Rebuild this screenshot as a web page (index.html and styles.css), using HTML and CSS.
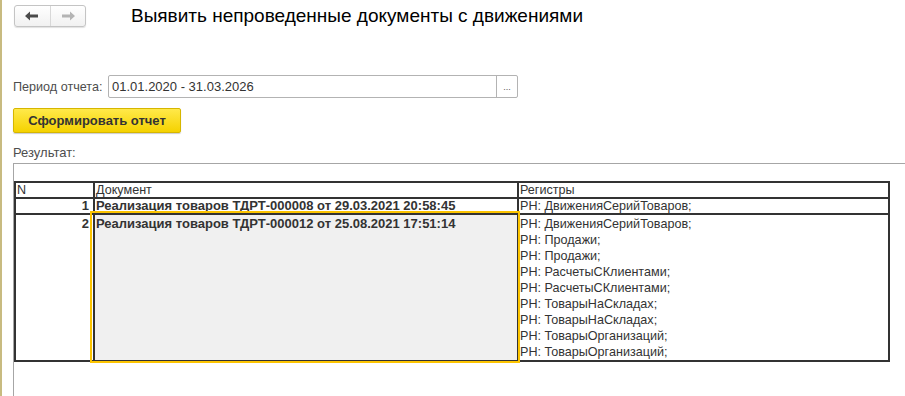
FILE: index.html
```html
<!DOCTYPE html>
<html lang="ru">
<head>
    <meta charset="UTF-8">
    <title>Выявить непроведенные документы с движениями</title>
    <link rel="stylesheet" href="styles.css">
</head>
<body>

<div class="window">
    <!-- Шапка формы -->
    <div class="header">
        <div class="nav">
            <span class="nav-btn">
                <svg width="14" height="10" viewBox="0 0 14 10"><path d="M0 5 L5 0.5 L5 3.5 L13 3.5 L13 6.5 L5 6.5 L5 9.5 Z" fill="#4a4a4a"/></svg>
            </span>
            <span class="nav-btn">
                <svg width="14" height="10" viewBox="0 0 14 10"><path d="M14 5 L9 0.5 L9 3.5 L1 3.5 L1 6.5 L9 6.5 L9 9.5 Z" fill="#b4b4b4"/></svg>
            </span>
        </div>
        <h1 class="title">Выявить непроведенные документы с движениями</h1>
    </div>

    <!-- Период -->
    <div class="period">
        <label class="period-label">Период отчета:</label>
        <div class="field">
            <span class="field-value">01.01.2020 - 31.03.2026</span>
            <span class="field-btn">...</span>
        </div>
    </div>

    <button class="btn-make">Сформировать отчет</button>

    <div class="result-label">Результат:</div>

    <!-- Табличный документ -->
    <div class="sheet">
        <table class="report">
            <tr class="head">
                <td class="col-n">N</td>
                <td class="col-doc">Документ</td>
                <td class="col-reg">Регистры</td>
            </tr>
            <tr>
                <td class="num">1</td>
                <td class="doc">Реализация товаров ТДРТ-000008 от 29.03.2021 20:58:45</td>
                <td>РН: ДвиженияСерийТоваров;</td>
            </tr>
            <tr class="tall">
                <td class="num">2</td>
                <td class="doc selected">Реализация товаров ТДРТ-000012 от 25.08.2021 17:51:14</td>
                <td>
                    <div>РН: ДвиженияСерийТоваров;</div>
                    <div>РН: Продажи;</div>
                    <div>РН: Продажи;</div>
                    <div>РН: РасчетыСКлиентами;</div>
                    <div>РН: РасчетыСКлиентами;</div>
                    <div>РН: ТоварыНаСкладах;</div>
                    <div>РН: ТоварыНаСкладах;</div>
                    <div>РН: ТоварыОрганизаций;</div>
                    <div>РН: ТоварыОрганизаций;</div>
                </td>
            </tr>
        </table>
    </div>
</div>

</body>
</html>
```

FILE: styles.css
```css
body {
    margin: 0;
    padding: 0;
    font-family: "Liberation Sans", Arial, sans-serif;
    background-color: #fff;
    color: #333;
    overflow: hidden;
}
.window {
    height: 396px;
    border-left: 2px solid #c8bb80;
    box-sizing: border-box;
}
.header {
    display: flex;
    align-items: center;
    padding-top: 5px;
}
.nav {
    display: flex;
    margin-left: 12px;
    width: 72px;
    height: 22px;
    box-sizing: border-box;
    border: 1px solid #c4c4c4;
    border-radius: 3px;
    background: linear-gradient(#ffffff, #f1f1f1);
    box-shadow: 0 1px 1px rgba(0, 0, 0, 0.12);
}
.nav-btn {
    flex: 1;
    display: flex;
    align-items: center;
    justify-content: center;
}
.nav-btn + .nav-btn {
    border-left: 1px solid #d8d8d8;
}
.title {
    margin: 0 0 0 45px;
    font-size: 19px;
    font-weight: normal;
    color: #000;
    line-height: 22px;
}
.period {
    display: flex;
    align-items: center;
    margin: 48px 0 0 11px;
}
.period-label {
    font-size: 12.6px;
    color: #4d4d4d;
    width: 95px;
}
.field {
    display: flex;
    width: 410px;
    height: 23px;
    box-sizing: border-box;
    border: 1px solid #b3b3b3;
    border-radius: 2px;
}
.field-value {
    flex: 1;
    font-size: 13px;
    line-height: 21px;
    padding-left: 3px;
    color: #333;
}
.field-btn {
    width: 20px;
    border-left: 1px solid #b3b3b3;
    font-size: 9px;
    line-height: 22px;
    text-align: center;
    color: #555;
}
.btn-make {
    display: block;
    margin: 10px 0 0 11px;
    width: 168px;
    height: 25px;
    border: 1px solid #d6b600;
    border-radius: 2px;
    background: linear-gradient(#ffe94a, #f5d200);
    box-shadow: 0 1px 1px rgba(0, 0, 0, 0.2);
    font-family: "Liberation Sans", Arial, sans-serif;
    font-size: 13px;
    font-weight: bold;
    color: #333;
    padding: 0;
}
.result-label {
    margin: 12px 0 0 11px;
    font-size: 13px;
    color: #4d4d4d;
    line-height: 15px;
}
.sheet {
    margin: 3px 0 0 11px;
    height: 215px;
    border-top: 1px solid #a6a6a6;
    border-left: 1px solid #a6a6a6;
    padding-top: 17px;
}
.report {
    width: 876px;
    border-collapse: collapse;
    font-size: 12.6px;
    color: #333;
}
.report td {
    border: 2px solid #333;
    padding: 0 1px;
    line-height: 14px;
    vertical-align: top;
    white-space: nowrap;
}
.col-n {
    width: 75px;
}
.col-doc {
    width: 420px;
}
.report td.num {
    text-align: right;
    font-weight: bold;
    font-size: 13px;
    padding-right: 4px;
}
.doc {
    font-weight: bold;
    font-size: 13px;
}
.tall td {
    line-height: 16px;
    padding-top: 1px;
    padding-bottom: 0;
}
.selected {
    position: relative;
    background-color: #f0f0f0;
}
.selected::after {
    content: "";
    position: absolute;
    top: -4px;
    left: -5px;
    right: -3px;
    bottom: -3px;
    border: 2px solid #fcc400;
}
```
